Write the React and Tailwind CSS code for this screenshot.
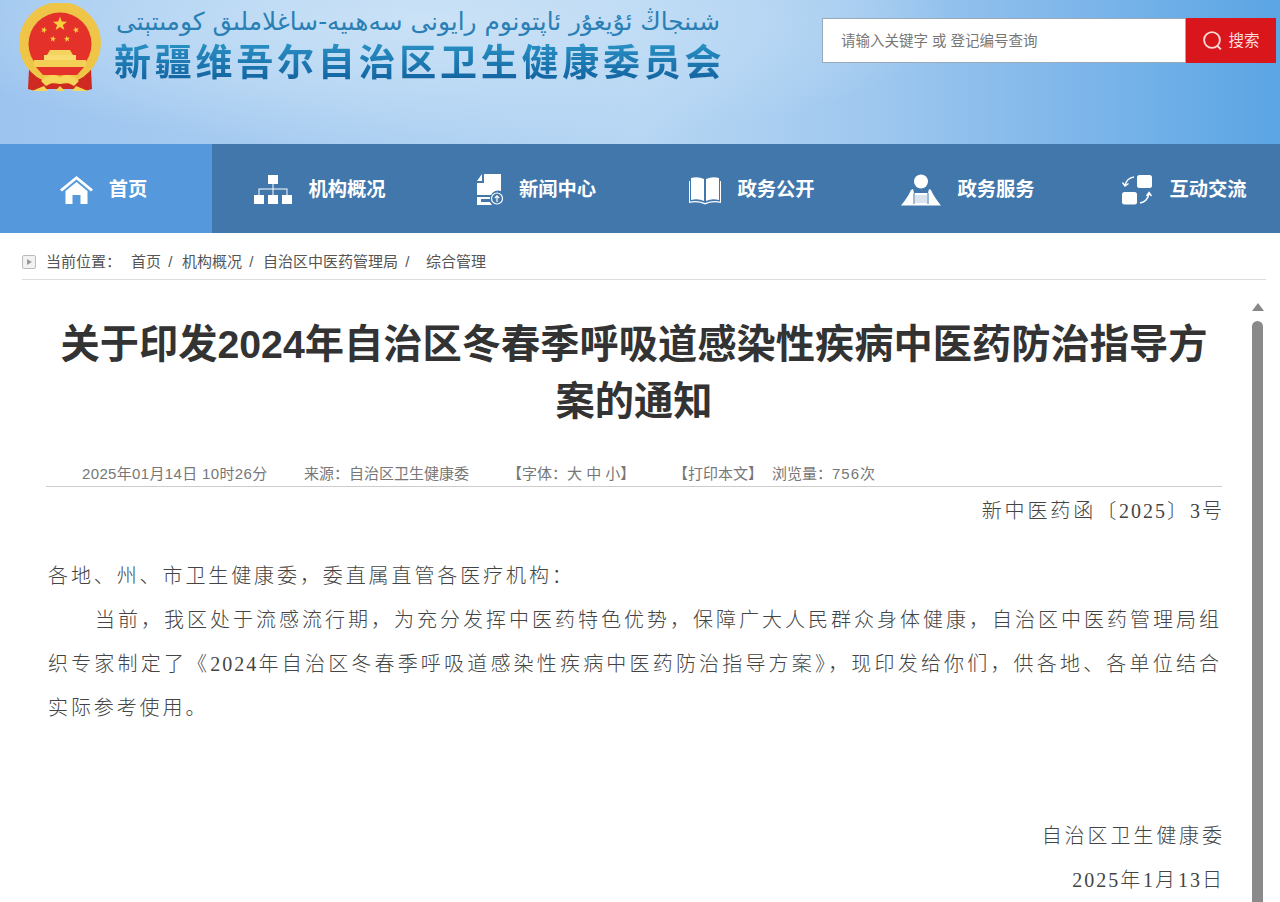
const sans = "font-['Liberation_Sans','Noto_Sans_CJK_SC',sans-serif]";

function Emblem() {
  const star = (cx, cy, r, rot = 0) => {
    const pts = [];
    for (let i = 0; i < 10; i++) {
      const a = ((i * 36 + rot - 90) * Math.PI) / 180;
      const rr = i % 2 === 0 ? r : r * 0.4;
      pts.push(`${cx + rr * Math.cos(a)},${cy + rr * Math.sin(a)}`);
    }
    return <polygon points={pts.join(' ')} fill="#f7d23e" />;
  };
  return (
    <svg width="86" height="90" viewBox="0 0 86 90" className="shrink-0">
      <path d="M12 66 L11 86 Q22 90 30 86 L56 86 Q64 90 75 86 L74 66 Z" fill="#cf2a22" />
      <circle cx="43" cy="40" r="41" fill="#eec547" />
      <circle cx="43" cy="41" r="31.5" fill="#e4312a" />
      <path d="M10 46 Q14 68 30 73 L56 73 Q72 68 76 46 L80 50 Q74 80 43 80 Q12 80 6 50 Z" fill="#eec547" />
      {star(43, 21, 7.5)}
      {star(27, 27, 3.4, 20)}
      {star(59, 27, 3.4, -20)}
      {star(36, 36, 3.2, 10)}
      {star(50, 36, 3.2, -10)}
      <path d="M33 47 H53 L56 52 H30 Z" fill="#f4d35e" />
      <rect x="27" y="52" width="32" height="5" fill="#f8dc70" />
      <rect x="17" y="57" width="52" height="7" fill="#f4cf55" />
      <path d="M19 64 H67 L60 72 H26 Z" fill="#e4312a" />
      <path d="M24 78 Q36 68 43 75 Q50 68 62 78 L57 83 Q48 77 43 81 Q38 77 29 83 Z" fill="#f6d65a" />
      <path d="M15 88 L27 83 L31 88 Z M71 88 L59 83 L55 88 Z M38 88 L43 83 L48 88 Z" fill="#f6d65a" />
    </svg>
  );
}

function HomeIcon() {
  return (
    <svg width="33" height="28" viewBox="0 0 33 28" fill="white">
      <path d="M0 13.5 L16.5 0 L33 13.5 L31 15.5 L16.5 3.6 L2 15.5 Z" />
      <path d="M5.5 15 L16.5 6 L27.5 15 V28 H20.5 V19 H12.5 V28 H5.5 Z" />
    </svg>
  );
}

function OrgIcon() {
  return (
    <svg width="38" height="30" viewBox="0 0 38 30" fill="white">
      <rect x="14" y="0" width="10" height="9" />
      <rect x="0" y="20" width="10" height="9" />
      <rect x="14" y="20" width="10" height="9" />
      <rect x="28" y="20" width="10" height="9" />
      <path d="M18.5 9 h1 v4.5 H33.5 V20 h-1 v-5.5 H19.5 V20 h-1 v-5.5 H5.5 V20 h-1 V13.5 H18.5 Z" />
    </svg>
  );
}

function NewsIcon() {
  return (
    <svg width="27" height="32" viewBox="0 0 27 32" fill="white">
      <path d="M6 0 V7 H1 Z M8 0 H25 V17 A8 8 0 0 0 15 21 H1 V9 H8 Z" />
      <path d="M1 23 H14 V25 H5 V28 H14 Q15 30 16 31 H1 Z" />
      <circle cx="21" cy="24.5" r="5.5" fill="none" stroke="white" strokeWidth="1.2" />
      <path d="M21 28 V22 M18.8 24 L21 21.8 L23.2 24" fill="none" stroke="white" strokeWidth="1.2" />
    </svg>
  );
}

function BookIcon() {
  return (
    <svg width="32" height="29" viewBox="0 0 32 29" fill="white">
      <path d="M2 2 Q9 0 15 3 V25 Q9 22 2 24 Z" />
      <path d="M17 3 Q23 0 30 2 V24 Q23 22 17 25 Z" />
      <path d="M0 5 V27 Q9 25 16 28.5 Q23 25 32 27 V5 H31 V25.5 Q23 24 16 27 Q9 24 1 25.5 V5 Z" />
    </svg>
  );
}

function ServiceIcon() {
  return (
    <svg width="40" height="32" viewBox="0 0 40 32" fill="white">
      <circle cx="20" cy="7.5" r="7" />
      <path d="M10 16 L12 15 L13 19 H27 L28 15 L30 16 Q33 23 40 31.5 H0 Q7 23 10 16 Z" />
      <path d="M13 19 V30 M27 19 V30" stroke="#4277ac" strokeWidth="1" />
      <rect x="14" y="21" width="12" height="8" fill="#4277ac" opacity="0.2" />
    </svg>
  );
}

function ExchangeIcon() {
  return (
    <svg width="32" height="30" viewBox="0 0 32 30" fill="white">
      <rect x="16" y="0" width="15" height="13" rx="2.5" />
      <rect x="1" y="17" width="15" height="12.5" rx="2.5" />
      <path d="M13 2 Q6 3 4 10 M1.5 7.5 L4 11 L7.5 8.5" fill="none" stroke="white" strokeWidth="1.4" />
      <path d="M19 28 Q26 27 28 19 M25.5 21 L28 17.5 L30.5 21" fill="none" stroke="white" strokeWidth="1.4" />
    </svg>
  );
}

const navItems = [
  { label: '机构概况', Icon: OrgIcon },
  { label: '新闻中心', Icon: NewsIcon },
  { label: '政务公开', Icon: BookIcon },
  { label: '政务服务', Icon: ServiceIcon },
  { label: '互动交流', Icon: ExchangeIcon },
];

export default function App() {
  return (
    <div className={`w-[1280px] h-[902px] overflow-hidden bg-white ${sans}`}>
      <header className="h-[144px] flex items-start bg-[radial-gradient(ellipse_520px_130px_at_430px_20px,#cbe2f6_0%,#c0dcf5cc_50%,#c0dcf500_100%),linear-gradient(90deg,#9cc4ef_0%,#a9cdf1_25%,#b6d6f3_50%,#9fc8ef_68%,#7cb5ea_85%,#5aa5e4_100%)]">
        <div className="ml-[17px] mt-[3px]"><Emblem /></div>
        <div className="ml-[11px] w-[612px] shrink-0 pt-[3px]">
          <div dir="rtl" className="h-[38px] w-[606px] whitespace-nowrap text-right text-[24.8px] leading-[38px] text-[#2a7fb5] font-['DejaVu_Sans',sans-serif]">
            شىنجاڭ ئۇيغۇر ئاپتونوم رايونى سەھىيە-ساغلاملىق كومىتېتى
          </div>
          <div className="h-[46px] whitespace-nowrap text-[37px] leading-[46px] font-bold tracking-[3.75px] text-transparent bg-clip-text bg-gradient-to-b from-[#2b93c6] to-[#0f5c9a]">
            新疆维吾尔自治区卫生健康委员会
          </div>
        </div>
        <div className="ml-[96px] mt-[18px] flex h-[45px] w-[454px] shrink-0">
          <div className="flex-1 flex items-center bg-white border border-[#9aa9b8] pl-[18px] pt-[2px] text-[14.5px] text-[#777]">请输入关键字 或 登记编号查询</div>
          <div className="w-[90px] flex items-center justify-center gap-[5px] bg-[#d9161c] text-[#fbdcdc] text-[15.5px]">
            <svg width="21" height="21" viewBox="0 0 20 20" fill="none" stroke="#fcd9d4" strokeWidth="1.8">
              <circle cx="9.5" cy="9.5" r="7.5" />
              <path d="M14.5 15 L18 18.5" />
            </svg>
            搜索
          </div>
        </div>
      </header>

      <nav className="h-[89px] flex overflow-hidden bg-[#4277ac] text-white font-bold text-[19.3px]">
        <div className="w-[212px] shrink-0 flex items-center justify-center gap-[16px] bg-[#5599dc] pr-[5px] pt-[3px]">
          <HomeIcon />
          <span>首页</span>
        </div>
        {navItems.map(({ label, Icon }) => (
          <div key={label} className="w-[216px] shrink-0 flex items-center justify-center gap-[16px] pt-[3px]">
            <Icon />
            <span>{label}</span>
          </div>
        ))}
      </nav>

      <div className="mx-[22px] w-[1244px] h-[47px] flex items-center border-b border-[#ddd] text-[15px] text-[#555] pt-[12px] whitespace-nowrap [word-spacing:3px]">
        <span className="w-[14px] h-[14px] border border-[#bbb] rounded-[2px] bg-[#f2f2f2] flex items-center justify-center">
          <span className="w-0 h-0 border-y-[3.5px] border-y-transparent border-l-[5px] border-l-[#999]" />
        </span>
        <span className="ml-[10px] w-[85px]">当前位置：</span>
        <span className="w-[51px]">首页 /</span>
        <span className="w-[81px]">机构概况 /</span>
        <span className="w-[163px]">自治区中医药管理局 /</span>
        <span>综合管理</span>
      </div>

      <div className="flex">
        <main className="ml-[46px] w-[1176px] shrink-0">
          <h1 className="mt-[36px] text-center text-[39.25px] leading-[57px] font-bold text-[#333]">
            关于印发2024年自治区冬春季呼吸道感染性疾病中医药防治指导方案的通知
          </h1>
          <div className="mt-[31px] h-[26px] flex items-center border-b border-[#ccc] pl-[36px] pt-[2px] text-[15px] text-[#777] whitespace-nowrap">
            <span className="w-[222px] tracking-[0.35px]">2025年01月14日 10时26分</span>
            <span className="w-[203px]">来源：自治区卫生健康委</span>
            <span className="w-[166px]">【字体：大 中 小】</span>
            <span className="w-[99px]">【打印本文】</span>
            <span>浏览量：<span className="tracking-[1px]">756</span>次</span>
          </div>
          <div className="pt-[2px] text-[20px] leading-[44px] tracking-[2.9px] text-[#444] font-light font-['Liberation_Serif','Noto_Sans_CJK_SC',serif]">
            <p className="text-right mr-[-2.9px]">新中医药函〔<span className="tracking-[2px]">2025</span>〕<span className="tracking-[2px]">3</span>号</p>
            <p className="mt-[21px] pl-[2px]">各地、州、市卫生健康委，委直属直管各医疗机构：</p>
            <p className="pl-[2px]">
              <span className="block indent-[47px] [text-align-last:justify]">当前，我区处于流感流行期，为充分发挥中医药特色优势，保障广大人民群众身体健康，自治区中医药管理局组</span>
              <span className="block [text-align-last:justify]">织专家制定了《<span className="tracking-[2px]">2024</span>年自治区冬春季呼吸道感染性疾病中医药防治指导方案》，现印发给你们，供各地、各单位结合</span>
              <span className="block">实际参考使用。</span>
            </p>
            <p className="mt-[84px] text-right mr-[-2.9px]">自治区卫生健康委</p>
            <p className="text-right mr-[-2.9px]"><span className="tracking-[2px]">2025</span>年<span className="tracking-[2px]">1</span>月<span className="tracking-[2px]">13</span>日</p>
          </div>
        </main>
        <aside className="ml-[30px] w-[11px] flex flex-col items-center pt-[23px]">
          <span className="w-0 h-0 border-x-[6px] border-x-transparent border-b-[8px] border-b-[#888]" />
          <span className="mt-[10px] w-[11px] h-[600px] rounded-t-full bg-[#8a8a8a]" />
        </aside>
      </div>
    </div>
  );
}
